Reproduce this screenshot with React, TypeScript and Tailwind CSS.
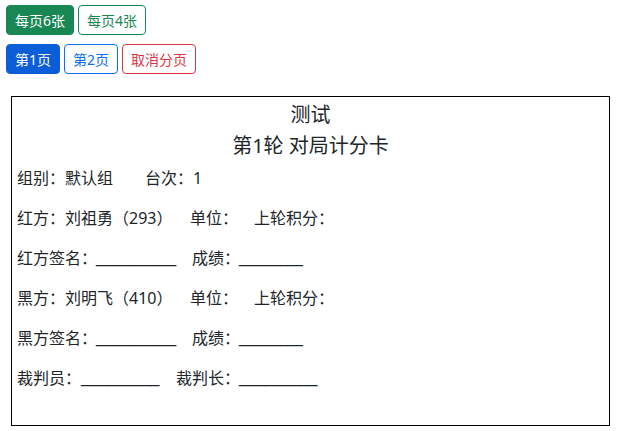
import React from "react";

const font = { fontFamily: '"Noto Sans", "Noto Sans CJK SC", sans-serif' };

function Line({ w, n, t }: { w: string; n: number; t: string }) {
  return (
    <span className={"inline-block whitespace-nowrap font-['Liberation_Sans',sans-serif] " + w + " " + t}>{"_".repeat(n)}</span>
  );
}

export default function App() {
  const row = "h-[40px] flex items-center whitespace-nowrap";
  const btn = "h-[30px] rounded-[4px] border text-[14px] flex items-center justify-center";
  return (
    <div className="bg-white text-[#212529] text-[16px]" style={font}>
      <div className="flex gap-[4px] pl-[6px] pt-[5px]">
        <button className={btn + " w-[68px] bg-[#198754] border-[#198754] text-white"}>每页6张</button>
        <button className={btn + " w-[68px] bg-white border-[#198754] text-[#198754]"}>每页4张</button>
      </div>
      <div className="flex gap-[4px] pl-[6px] pt-[9px]">
        <button className={btn + " w-[54px] bg-[#0b5ed7] border-[#0b5ed7] text-white"}>第1页</button>
        <button className={btn + " w-[54px] bg-white border-[#0d6efd] text-[#0d6efd]"}>第2页</button>
        <button className={btn + " w-[74px] bg-white border-[#dc3545] text-[#dc3545]"}>取消分页</button>
      </div>
      <div className="ml-[11px] mt-[22px] w-[599px] h-[330px] border border-black px-[5px]">
        <div className="h-[33px] pt-[2px] flex items-center justify-center text-[20px]">测试</div>
        <div className="h-[32px] flex items-center justify-center text-[20px]">第1轮 对局计分卡</div>
        <div className="h-[32px] flex items-center whitespace-nowrap">
          <span className="w-[128px]">组别：默认组</span>
          <span>台次：1</span>
        </div>
        <div className={row + " mt-[4px]"}>
          <span className="w-[173px]">红方：刘祖勇（293）</span>
          <span className="w-[64px]">单位：</span>
          <span>上轮积分：</span>
        </div>
        <div className={row}>
          <span className="w-[79px]">红方签名：</span>
          <Line w="w-[80px]" n={9} t="tracking-[0px]" />
          <span className="ml-[16px] w-[47px]">成绩：</span>
          <Line w="w-[64px]" n={7} t="tracking-[0.25px]" />
        </div>
        <div className={row}>
          <span className="w-[173px]">黑方：刘明飞（410）</span>
          <span className="w-[64px]">单位：</span>
          <span>上轮积分：</span>
        </div>
        <div className={row}>
          <span className="w-[79px]">黑方签名：</span>
          <Line w="w-[80px]" n={9} t="tracking-[0px]" />
          <span className="ml-[16px] w-[47px]">成绩：</span>
          <Line w="w-[64px]" n={7} t="tracking-[0.25px]" />
        </div>
        <div className={row}>
          <span className="w-[64px]">裁判员：</span>
          <Line w="w-[78px]" n={9} t="tracking-[-0.2px]" />
          <span className="ml-[17px] w-[63px]">裁判长：</span>
          <Line w="w-[78px]" n={9} t="tracking-[-0.2px]" />
        </div>
      </div>
    </div>
  );
}
